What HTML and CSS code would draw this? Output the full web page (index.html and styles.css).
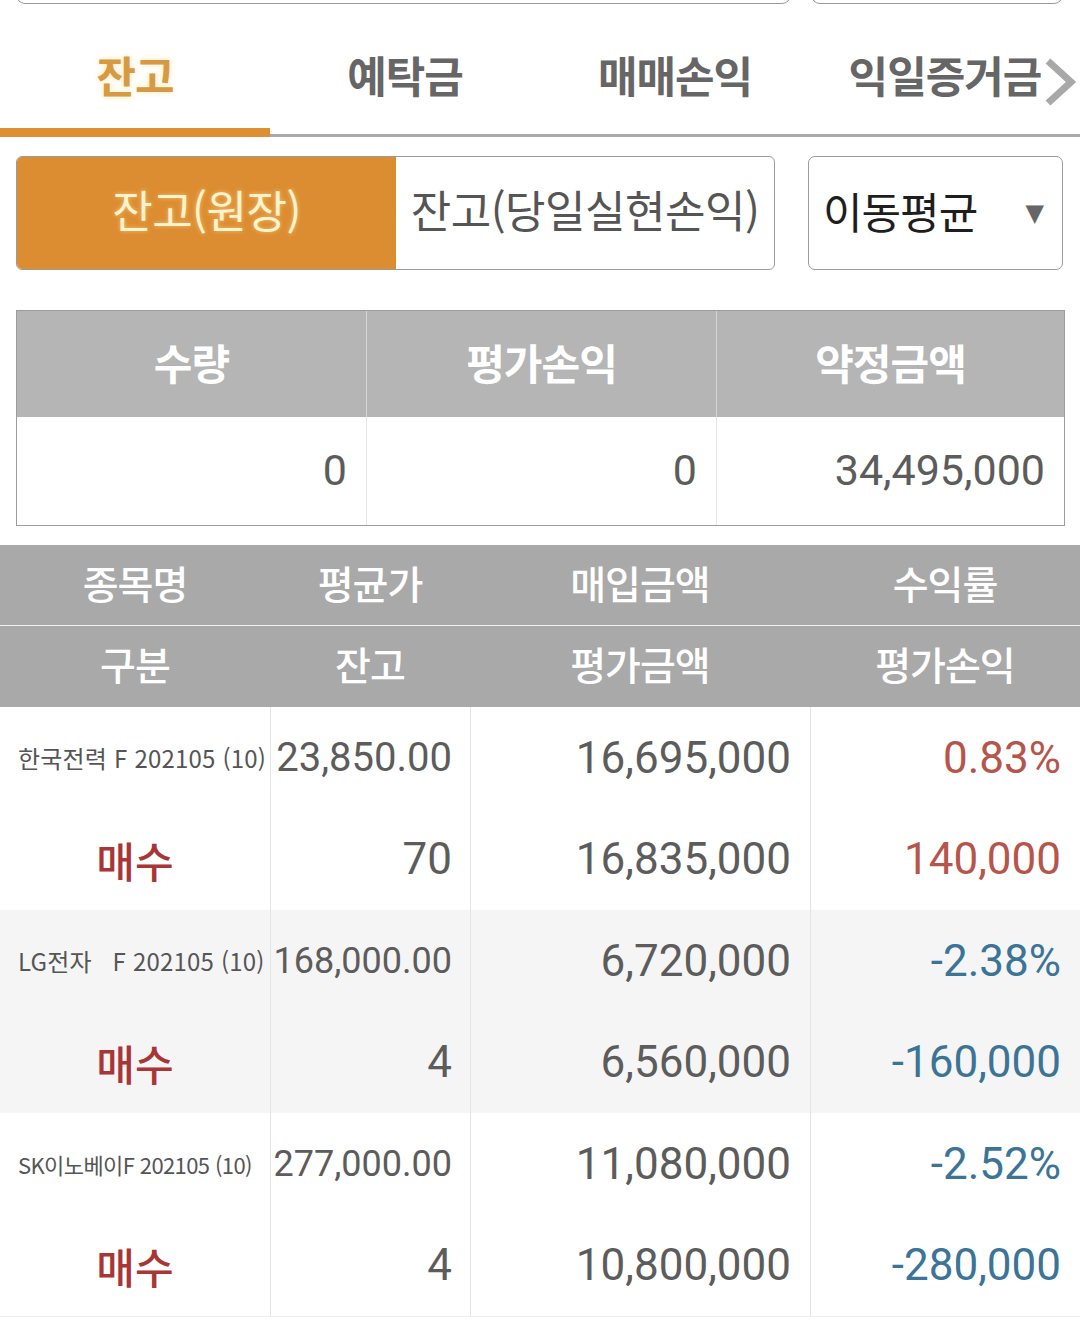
FILE: index.html
```html
<!DOCTYPE html>
<html lang="ko">
<head>
<meta charset="utf-8">
<link rel="stylesheet" href="styles.css">
</head>
<body>
<div class="topclip">
  <div class="topbox wide"></div>
  <div class="topbox narrow"></div>
</div>

<nav class="tabs">
  <div class="tab active">잔고</div>
  <div class="tab">예탁금</div>
  <div class="tab">매매손익</div>
  <div class="tab last">익일증거금
    <svg class="chev" width="36" height="50" viewBox="0 0 36 50"><path d="M6 4 L29 25 L6 46" fill="none" stroke="#a8a8a8" stroke-width="7" stroke-linejoin="miter"/></svg>
  </div>
</nav>

<div class="controls">
  <div class="seg">
    <div class="seg-item on">잔고(원장)</div>
    <div class="seg-item off">잔고(당일실현손익)</div>
  </div>
  <div class="dropdown">
    <span class="dd-label">이동평균</span>
    <span class="dd-arrow">▼</span>
  </div>
</div>

<div class="summary">
  <div class="sum-head">수량</div>
  <div class="sum-head">평가손익</div>
  <div class="sum-head">약정금액</div>
  <div class="sum-val">0</div>
  <div class="sum-val">0</div>
  <div class="sum-val">34,495,000</div>
</div>

<div class="list">
  <div class="list-head">
    <div class="lh">종목명</div><div class="lh">평균가</div><div class="lh">매입금액</div><div class="lh">수익률</div>
  </div>
  <div class="list-head second">
    <div class="lh">구분</div><div class="lh">잔고</div><div class="lh">평가금액</div><div class="lh">평가손익</div>
  </div>

  <div class="group">
    <div class="c name">한국전력 F 202105 (10)</div>
    <div class="c num mid">23,850.00</div>
    <div class="c num">16,695,000</div>
    <div class="c num up">0.83%</div>
    <div class="c side">매수</div>
    <div class="c num">70</div>
    <div class="c num">16,835,000</div>
    <div class="c num up">140,000</div>
  </div>

  <div class="group alt">
    <div class="c name">LG전자&nbsp;&nbsp;&nbsp;F 202105 (10)</div>
    <div class="c num small">168,000.00</div>
    <div class="c num">6,720,000</div>
    <div class="c num down">-2.38%</div>
    <div class="c side">매수</div>
    <div class="c num">4</div>
    <div class="c num">6,560,000</div>
    <div class="c num down">-160,000</div>
  </div>

  <div class="group last">
    <div class="c name tight">SK이노베이F 202105 (10)</div>
    <div class="c num small">277,000.00</div>
    <div class="c num">11,080,000</div>
    <div class="c num down">-2.52%</div>
    <div class="c side">매수</div>
    <div class="c num">4</div>
    <div class="c num">10,800,000</div>
    <div class="c num down">-280,000</div>
  </div>
</div>
</body>
</html>
```

FILE: styles.css
```css
* { box-sizing: border-box; }
html, body { margin: 0; padding: 0; background: #fff; }
body {
  width: 1080px;
  font-family: "Noto Sans CJK KR", "Noto Sans", sans-serif;
  color: #555;
}

.topclip {
  height: 5px;
  overflow: hidden;
  display: flex;
  align-items: flex-end;
  padding: 0 0 1px 16px;
  gap: 20px;
}
.topbox {
  height: 40px;
  border: 1.5px solid #9a9a9a;
  border-radius: 9px;
  flex: none;
}
.topbox.wide { width: 775px; }
.topbox.narrow { width: 252px; }

.tabs {
  display: flex;
  height: 132px;
}
.tab {
  position: relative;
  width: 270px;
  height: 100%;
  border-bottom: 3px solid #a9a9a9;
  padding-top: 48px;
  text-align: center;
  font-size: 43px;
  line-height: 1;
  font-weight: 700;
  color: #666;
  letter-spacing: -1px;
}
.tab.active {
  color: #d69a45;
  border-bottom: 9px solid #de8f32;
  text-shadow: 0 0 6px rgba(255, 226, 160, 0.8);
}
.chev {
  position: absolute;
  right: 2px;
  top: 52px;
}

.controls {
  display: flex;
  gap: 33px;
  padding: 19px 17px 0 16px;
}
.seg {
  width: 759px;
  height: 114px;
  display: flex;
  border: 1px solid #9c9c9c;
  border-radius: 6px;
  overflow: hidden;
}
.seg-item {
  display: flex;
  align-items: center;
  justify-content: center;
  font-size: 44px;
  padding-bottom: 8px;
  letter-spacing: -0.5px;
}
.seg-item.on {
  width: 379px;
  background: #dd8d31;
  color: #fff3cc;
  text-shadow: 0 0 4px rgba(255, 230, 170, 0.6);
}
.seg-item.off {
  flex: 1;
  color: #555;
}
.dropdown {
  flex: 1;
  height: 114px;
  border: 1px solid #9c9c9c;
  border-radius: 7px;
  display: flex;
  align-items: center;
  justify-content: space-between;
  padding: 0 18px 6px 14px;
}
.dd-label {
  font-size: 43px;
  color: #1e1e1e;
  letter-spacing: -1px;
}
.dd-arrow {
  font-size: 24px;
  color: #666;
  font-family: "DejaVu Sans", sans-serif;
  padding-top: 6px;
}

.summary {
  margin: 40px 15px 0 16px;
  border: 1px solid #9c9c9c;
  display: grid;
  grid-template-columns: 349px 350px 1fr;
  grid-template-rows: 106px 108px;
}
.sum-head {
  background: #b5b5b5;
  color: #fff;
  font-size: 42px;
  font-weight: 700;
  display: flex;
  align-items: center;
  justify-content: center;
  letter-spacing: -1px;
  padding-bottom: 6px;
}
.sum-head + .sum-head { border-left: 1px solid #d6d6d6; }
.sum-val {
  display: flex;
  align-items: center;
  justify-content: flex-end;
  padding-right: 19px;
  padding-bottom: 3px;
  font-family: "Roboto", sans-serif;
  font-size: 43px;
  color: #5c5c5c;
}
.sum-val + .sum-val { border-left: 1px solid #e6e6e6; }

.list { margin-top: 19px; }
.list-head {
  display: grid;
  grid-template-columns: 270px 200px 340px 270px;
  height: 80px;
  background: #a9a9a9;
}
.list-head.second {
  height: 82px;
  border-top: 1px solid #f2f2f2;
}
.lh {
  display: flex;
  align-items: center;
  justify-content: center;
  color: #fff;
  font-size: 39px;
  font-weight: 500;
  letter-spacing: -1px;
  padding-bottom: 7px;
}

.group {
  display: grid;
  grid-template-columns: 270px 200px 340px 270px;
  grid-template-rows: 101px 102px;
  background: #fff;
}
.group.alt { background: #f5f5f5; }
.group.last { border-bottom: 1px solid #ececec; }
.c {
  display: flex;
  align-items: center;
}
.c:not(.name):not(.side) { border-left: 1px solid #e4e4e4; }
.name {
  padding-left: 18px;
  font-size: 24px;
  color: #555;
  white-space: nowrap;
  letter-spacing: 0.2px;
}
.name.tight {
  font-size: 22px;
  letter-spacing: -0.6px;
}
.side {
  justify-content: center;
  font-size: 42px;
  font-weight: 500;
  color: #a93636;
}
.num {
  justify-content: flex-end;
  padding-right: 19px;
  font-family: "Roboto", sans-serif;
  font-size: 44px;
  color: #5c5c5c;
}
.num.mid { font-size: 40px; padding-right: 18px; }
.num.small { font-size: 36px; padding-right: 18px; }
.group .c:nth-child(6) { padding-right: 18px; }
.group .c:nth-child(4n) { padding-right: 19px; }
.up { color: #b5554b; }
.down { color: #3b7497; }
```
